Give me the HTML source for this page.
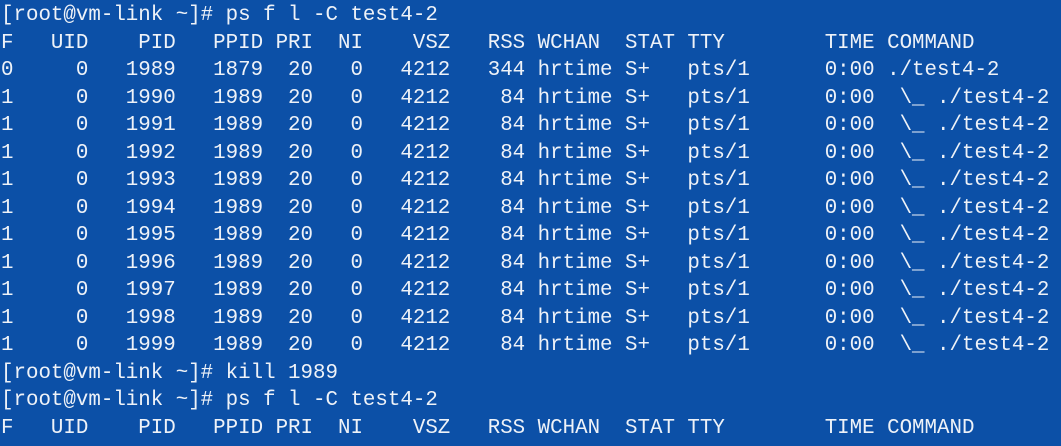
<!DOCTYPE html>
<html><head><meta charset="utf-8"><style>
html,body{margin:0;padding:0;background:#0c50a7;width:1061px;height:446px;overflow:hidden}
pre{margin:0;padding:2px 0 0 1px;font-family:"Liberation Mono",monospace;font-size:20.8px;line-height:27.5px;color:#eef2f8;white-space:pre}
</style></head><body><pre>[root@vm-link ~]# ps f l -C test4-2
F   UID    PID   PPID PRI  NI    VSZ   RSS WCHAN  STAT TTY        TIME COMMAND
0     0   1989   1879  20   0   4212   344 hrtime S+   pts/1      0:00 ./test4-2
1     0   1990   1989  20   0   4212    84 hrtime S+   pts/1      0:00  \_ ./test4-2
1     0   1991   1989  20   0   4212    84 hrtime S+   pts/1      0:00  \_ ./test4-2
1     0   1992   1989  20   0   4212    84 hrtime S+   pts/1      0:00  \_ ./test4-2
1     0   1993   1989  20   0   4212    84 hrtime S+   pts/1      0:00  \_ ./test4-2
1     0   1994   1989  20   0   4212    84 hrtime S+   pts/1      0:00  \_ ./test4-2
1     0   1995   1989  20   0   4212    84 hrtime S+   pts/1      0:00  \_ ./test4-2
1     0   1996   1989  20   0   4212    84 hrtime S+   pts/1      0:00  \_ ./test4-2
1     0   1997   1989  20   0   4212    84 hrtime S+   pts/1      0:00  \_ ./test4-2
1     0   1998   1989  20   0   4212    84 hrtime S+   pts/1      0:00  \_ ./test4-2
1     0   1999   1989  20   0   4212    84 hrtime S+   pts/1      0:00  \_ ./test4-2
[root@vm-link ~]# kill 1989
[root@vm-link ~]# ps f l -C test4-2
F   UID    PID   PPID PRI  NI    VSZ   RSS WCHAN  STAT TTY        TIME COMMAND</pre></body></html>
